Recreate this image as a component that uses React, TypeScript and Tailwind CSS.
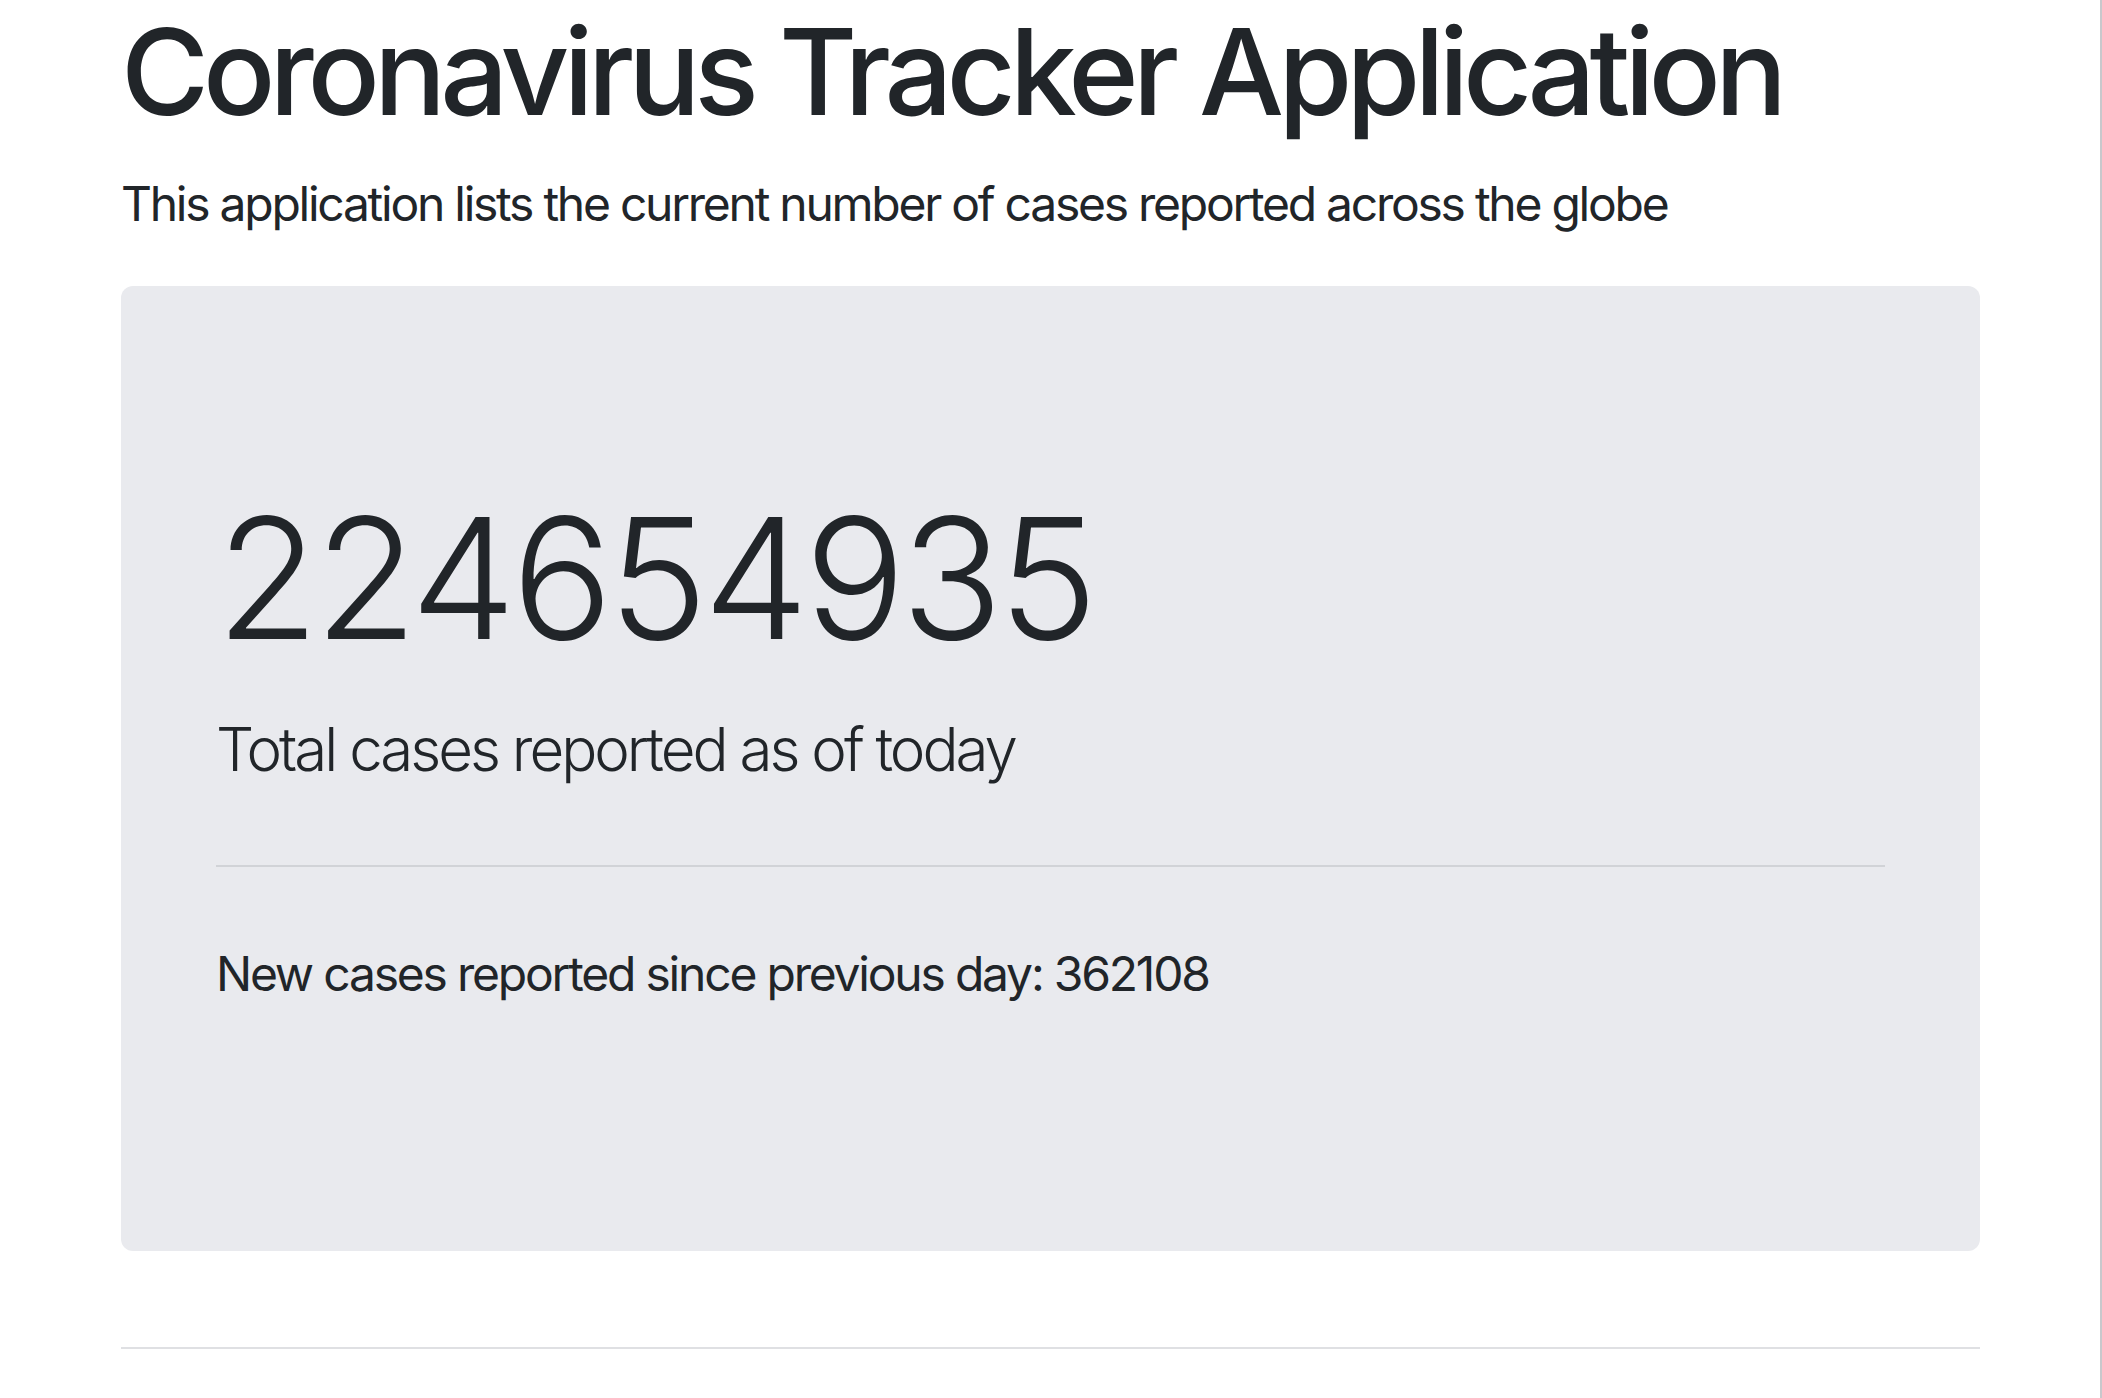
export default function App() {
  const totalCases = 224654935;
  const newCases = 362108;

  return (
    <div className="min-h-screen bg-white border-r-2 border-[#c8c8cc] text-[#212529] font-['Inter','Liberation_Sans',sans-serif]">
      <div className="ml-[121px] w-[1859px]">
        <h1 className="text-[120px] leading-[1.2] font-medium tracking-[-0.05em] mb-[24px]">Coronavirus Tracker Application</h1>
        <p className="text-[48px] leading-[1.5] tracking-[-0.047em] mb-[46px]">
          This application lists the current number of cases reported across the globe
        </p>

        <div className="bg-[#e9eaee] rounded-[12px] px-[95px] pt-[192px] pb-[193px]">
          <h2 className="text-[168px] font-light leading-[1.2] tracking-[-0.027em] mb-[24px]">{totalCases}</h2>
          <p className="text-[60px] font-light leading-[1.5] tracking-[-0.05em]">Total cases reported as of today</p>
          <hr className="my-[71px] border-t-2 border-[#d1d3d7]" />
          <p className="text-[48px] leading-[1.5] tracking-[-0.046em] mb-[48px]">New cases reported since previous day: {newCases}</p>
        </div>

        <hr className="mt-[96px] border-t-2 border-[#dfe0e3]" />
      </div>
    </div>
  );
}
